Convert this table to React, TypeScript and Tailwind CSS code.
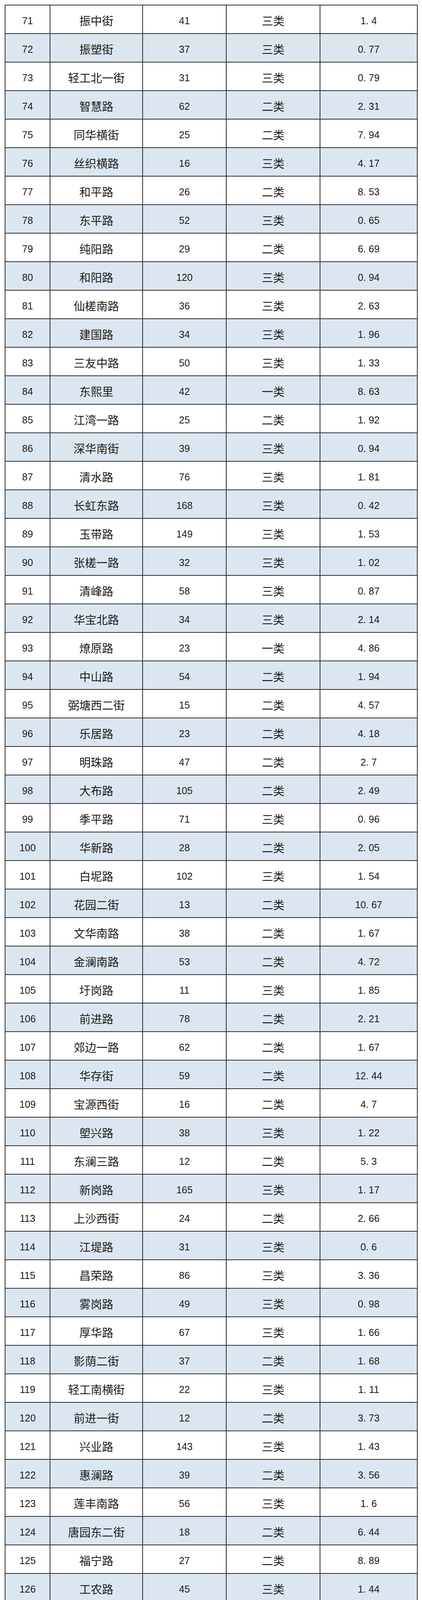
import React from "react";

type Row = [number, string, string, string, string];

const rows: Row[] = [
  [71, "振中街", "41", "三类", "1.4"],
  [72, "振塑街", "37", "三类", "0.77"],
  [73, "轻工北一街", "31", "三类", "0.79"],
  [74, "智慧路", "62", "二类", "2.31"],
  [75, "同华横街", "25", "二类", "7.94"],
  [76, "丝织横路", "16", "三类", "4.17"],
  [77, "和平路", "26", "二类", "8.53"],
  [78, "东平路", "52", "三类", "0.65"],
  [79, "纯阳路", "29", "二类", "6.69"],
  [80, "和阳路", "120", "三类", "0.94"],
  [81, "仙槎南路", "36", "三类", "2.63"],
  [82, "建国路", "34", "三类", "1.96"],
  [83, "三友中路", "50", "三类", "1.33"],
  [84, "东熙里", "42", "一类", "8.63"],
  [85, "江湾一路", "25", "二类", "1.92"],
  [86, "深华南街", "39", "三类", "0.94"],
  [87, "清水路", "76", "三类", "1.81"],
  [88, "长虹东路", "168", "三类", "0.42"],
  [89, "玉带路", "149", "三类", "1.53"],
  [90, "张槎一路", "32", "三类", "1.02"],
  [91, "清峰路", "58", "三类", "0.87"],
  [92, "华宝北路", "34", "三类", "2.14"],
  [93, "燎原路", "23", "一类", "4.86"],
  [94, "中山路", "54", "二类", "1.94"],
  [95, "弼塘西二街", "15", "二类", "4.57"],
  [96, "乐居路", "23", "二类", "4.18"],
  [97, "明珠路", "47", "二类", "2.7"],
  [98, "大布路", "105", "二类", "2.49"],
  [99, "季平路", "71", "三类", "0.96"],
  [100, "华新路", "28", "二类", "2.05"],
  [101, "白坭路", "102", "三类", "1.54"],
  [102, "花园二街", "13", "二类", "10.67"],
  [103, "文华南路", "38", "二类", "1.67"],
  [104, "金澜南路", "53", "二类", "4.72"],
  [105, "圩岗路", "11", "三类", "1.85"],
  [106, "前进路", "78", "二类", "2.21"],
  [107, "郊边一路", "62", "二类", "1.67"],
  [108, "华存街", "59", "二类", "12.44"],
  [109, "宝源西街", "16", "二类", "4.7"],
  [110, "塱兴路", "38", "三类", "1.22"],
  [111, "东澜三路", "12", "二类", "5.3"],
  [112, "新岗路", "165", "三类", "1.17"],
  [113, "上沙西街", "24", "二类", "2.66"],
  [114, "江堤路", "31", "三类", "0.6"],
  [115, "昌荣路", "86", "三类", "3.36"],
  [116, "雾岗路", "49", "三类", "0.98"],
  [117, "厚华路", "67", "三类", "1.66"],
  [118, "影荫二街", "37", "二类", "1.68"],
  [119, "轻工南横街", "22", "三类", "1.11"],
  [120, "前进一街", "12", "二类", "3.73"],
  [121, "兴业路", "143", "三类", "1.43"],
  [122, "惠澜路", "39", "二类", "3.56"],
  [123, "莲丰南路", "56", "三类", "1.6"],
  [124, "唐园东二街", "18", "二类", "6.44"],
  [125, "福宁路", "27", "二类", "8.89"],
  [126, "工农路", "45", "三类", "1.44"],
  [127, "桂奇路", "22", "三类", "1.91"],
  [128, "文华中路（曼克顿山小区东侧）", "13", "二类", "1.98"],
  [129, "彩虹路", "29", "二类", "1.98"],
  [130, "佛山大道（国税局西侧）", "11", "二类", "0.17"],
  [131, "茂祥路", "20", "二类", "9.08"],
  [132, "建设一街", "27", "二类", "6.28"],
  [133, "建设二街", "24", "二类", "6.64"],
  [134, "轻工北二街", "44", "三类", "1.53"],
  [135, "惠景南一街", "45", "二类", "1.55"],
  [136, "屈龙三街", "16", "二类", "3.13"],
  [137, "货站东路", "85", "三类", "1.6"],
  [138, "华景路", "120", "二类", "3.34"],
  [139, "湖明街", "40", "二类", "7.52"],
  [140, "桂奇路", "22", "三类", "1.91"],
  [141, "货站东路", "22", "三类", "1.6"],
];

function Decimal({ v }: { v: string }) {
  const i = v.indexOf(".");
  if (i < 0) return <span>{v}</span>;
  return (
    <span>
      {v.slice(0, i)}
      <span className="mr-[7px]">.</span>
      {v.slice(i + 1)}
    </span>
  );
}

const cellBase =
  "flex items-center justify-center text-center overflow-hidden border-r-2 border-b-2 border-[#2e2e2e] pt-[6px]";
const numFont = "font-['Liberation_Sans','Noto_Sans_CJK_SC',sans-serif] text-[25px] leading-[30px]";
const cjkFont = "font-['Noto_Sans_CJK_SC',sans-serif] text-[29px] leading-[37px]";

function TableRow({ row }: { row: Row }) {
  const [no, name, count, cat, val] = row;
  const tall = name.length > 7;
  const bg = no % 2 === 0 ? "bg-[#dce6f1]" : "bg-white";
  const h = tall ? "h-[95px]" : "h-[73px]";
  return (
    <div className={`grid grid-cols-[115px_237px_214px_240px_249px] overflow-hidden ${bg} ${h}`}>
      <div className={`${cellBase} ${numFont}`}>{no}</div>
      <div className={`${cellBase} ${cjkFont} px-[12px]`}>{name}</div>
      <div className={`${cellBase} ${numFont}`}>{count}</div>
      <div className={`${cellBase} ${cjkFont}`}>{cat}</div>
      <div className={`${cellBase} ${numFont}`}>
        <Decimal v={val} />
      </div>
    </div>
  );
}

function Watermark() {
  return (
    <div className="absolute left-[0px] bottom-[-8px] flex items-center gap-[3px] opacity-90">
      <svg width="40" height="30" viewBox="0 0 40 30" className="drop-shadow-[0_0_1px_rgba(0,0,0,0.7)]">
        <path
          d="M9 4 C3 9 3 20 10 26 C14 29 19 28 22 25"
          fill="none"
          stroke="#ffffff"
          strokeWidth="3.2"
          strokeLinecap="round"
        />
        <path d="M11 15 L18 22" fill="none" stroke="#ffffff" strokeWidth="3" strokeLinecap="round" />
        <circle cx="20" cy="9" r="5" fill="none" stroke="#ffffff" strokeWidth="2.6" />
        <circle cx="32" cy="9" r="5" fill="none" stroke="#ffffff" strokeWidth="2.6" />
      </svg>
      <span className="font-['Noto_Sans_CJK_SC',sans-serif] text-[22px] font-bold leading-none text-white [text-shadow:0_0_2px_rgba(0,0,0,0.8),0_1px_1px_rgba(0,0,0,0.6)]">
        大数跨境
      </span>
    </div>
  );
}

export default function App() {
  return (
    <div className="w-[1080px] bg-white pt-[12px] pb-[10px] pl-[12px] text-[#1c1c1c]">
      <div className="relative w-[1057px] border-t-2 border-l-2 border-[#2e2e2e]">
        {rows.map((r) => (
          <TableRow key={r[0]} row={r} />
        ))}
        <Watermark />
      </div>
    </div>
  );
}
